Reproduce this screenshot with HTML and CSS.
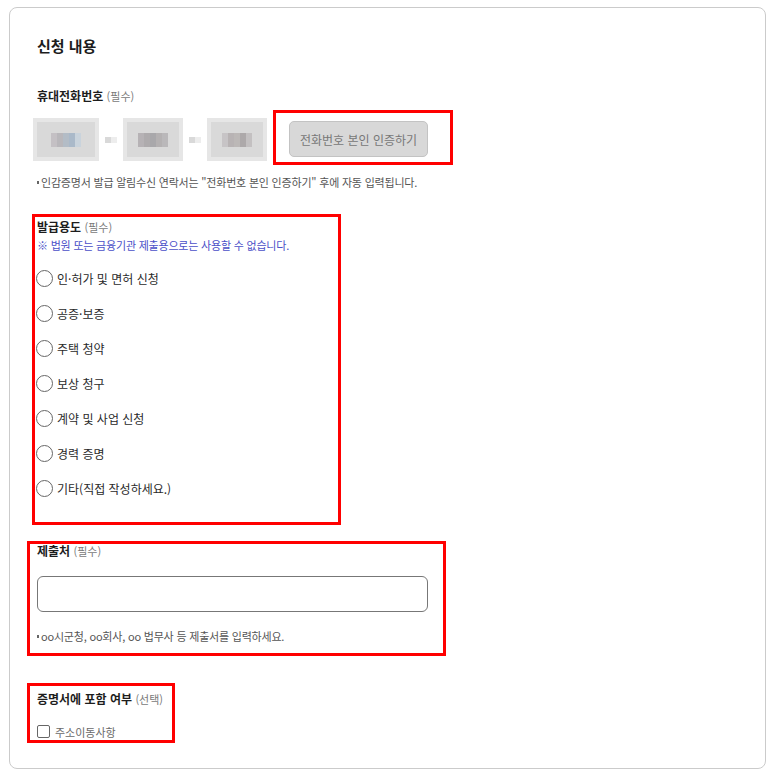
FILE: index.html
```html
<!DOCTYPE html>
<html lang="ko">

<head>
    <meta charset="UTF-8">
    <meta name="viewport" content="width=device-width, initial-scale=1.0">
    <title>신청 내용</title>
    <link rel="stylesheet" href="styles.css">
</head>

<body>
    <div class="card">
        <h2 class="title">신청 내용</h2>

        <div class="label">휴대전화번호 <span class="req">(필수)</span></div>
        <div class="phone-row">
            <div class="blur blur-wide">
                <span class="px" style="background:#c4c0c4"></span><span class="px" style="background:#b9b7bb"></span><span class="px" style="background:#b3bcc6"></span><span class="px" style="background:#aab9c9"></span><span class="px" style="background:#c9d3dc"></span>
            </div>
            <span class="dash"></span>
            <div class="blur">
                <span class="px" style="background:#b6b2b5"></span><span class="px" style="background:#aeabad"></span><span class="px" style="background:#a9a8ab"></span><span class="px" style="background:#b4b1b2"></span><span class="px" style="background:#bab8ba"></span>
            </div>
            <span class="dash"></span>
            <div class="blur">
                <span class="px" style="background:#c7c4c6"></span><span class="px" style="background:#b8b3b4"></span><span class="px" style="background:#bcb8b7"></span><span class="px" style="background:#ada9aa"></span><span class="px" style="background:#c3c0c1"></span>
            </div>
            <div class="mark mark-btn">
                <button class="verify" type="button" disabled>전화번호 본인 인증하기</button>
            </div>
        </div>
        <p class="note">인감증명서 발급 알림수신 연락서는 "전화번호 본인 인증하기" 후에 자동 입력됩니다.</p>

        <div class="mark mark-usage">
            <div class="label">발급용도 <span class="req">(필수)</span></div>
            <p class="warn">※ 법원 또는 금융기관 제출용으로는 사용할 수 없습니다.</p>
            <ul class="radios">
                <li><span class="radio"></span>인·허가 및 면허 신청</li>
                <li><span class="radio"></span>공증·보증</li>
                <li><span class="radio"></span>주택 청약</li>
                <li><span class="radio"></span>보상 청구</li>
                <li><span class="radio"></span>계약 및 사업 신청</li>
                <li><span class="radio"></span>경력 증명</li>
                <li><span class="radio"></span>기타(직접 작성하세요.)</li>
            </ul>
        </div>

        <div class="mark mark-place">
            <div class="label label-tight">제출처 <span class="req">(필수)</span></div>
            <input class="text-input" type="text">
            <p class="note">oo시군청, oo회사, oo 법무사 등 제출서를 입력하세요.</p>
        </div>

        <div class="mark mark-include">
            <div class="label">증명서에 포함 여부 <span class="req">(선택)</span></div>
            <label class="check"><span class="box"></span>주소이동사항</label>
        </div>
    </div>
</body>

</html>
```

FILE: styles.css
```css
* {
    box-sizing: border-box;
}

body {
    margin: 0;
    background: #fff;
    font-family: "Noto Sans CJK KR", "Noto Sans", sans-serif;
    color: #222;
    overflow: hidden;
}

.card {
    margin: 7px 0 0 9px;
    width: calc(100% - 9px);
    border: 1px solid #cbcbcb;
    border-radius: 8px;
    padding: 0 0 25px 27px;
}

.title {
    margin: 27px 0 0;
    font-size: 15px;
    line-height: 22px;
    font-weight: 700;
    color: #1d1d1d;
}

.label {
    margin-top: 30px;
    font-size: 12px;
    line-height: 18px;
    font-weight: 700;
    color: #1d1d1d;
}

.req {
    font-size: 11px;
    font-weight: 400;
    color: #7a7a7a;
}

/* phone number */
.phone-row {
    display: flex;
    align-items: flex-start;
    gap: 6px;
    margin: 5px 0 0 -4px;
}

.blur {
    width: 60px;
    height: 43px;
    margin-top: 8px;
    background: #d9d9d9;
    box-shadow: inset 0 0 0 4px #e6e6e6;
    display: flex;
    align-items: center;
    justify-content: center;
    padding: 0 4px;
}

.blur-wide {
    width: 66px;
}

.px {
    width: 6px;
    height: 14px;
}

.dash {
    width: 12px;
    height: 6px;
    margin-top: 27px;
    background: linear-gradient(90deg, #d9d9d9 50%, #ededed 50%);
}

.mark {
    border: 3px solid #ff0000;
}

.mark-btn {
    padding: 8px 22px 5px 13px;
}

.verify {
    width: 139px;
    height: 36px;
    background: #d8d8d8;
    border: 1px solid #c3c3c3;
    border-radius: 5px;
    font-family: inherit;
    font-size: 12px;
    color: #777;
    padding: 0;
}

.note {
    margin: 9px 0 0;
    font-size: 11px;
    line-height: 16px;
    letter-spacing: -0.2px;
    color: #555;
    position: relative;
    padding-left: 4px;
}

.note::before {
    content: "";
    position: absolute;
    left: 0;
    top: 7px;
    width: 2px;
    height: 3px;
    background: #666;
}

/* usage */
.mark-usage {
    width: 309px;
    margin: 24px 0 0 -5px;
    padding: 1px 0 16px 2px;
}

.mark-usage .label {
    margin-top: 0;
}

.warn {
    margin: 1px 0 0;
    font-size: 11px;
    line-height: 16px;
    letter-spacing: -0.2px;
    color: #4b50c8;
}

.radios {
    list-style: none;
    margin: 8px 0 0;
    padding: 0;
}

.radios li {
    display: flex;
    align-items: center;
    height: 35px;
    font-size: 12px;
    color: #2a2a2a;
}

.radio {
    width: 17px;
    height: 17px;
    border: 1.5px solid #666;
    border-radius: 50%;
    margin: 0 4px 0 -1px;
    background: #fff;
}

/* place */
.mark-place {
    width: 419px;
    margin: 16px 0 0 -10px;
    padding: 0 0 9px 7px;
}

.label-tight {
    margin-top: 0;
    line-height: 14px;
}

.text-input {
    display: block;
    width: 391px;
    height: 36px;
    margin-top: 18px;
    border: 1px solid #777;
    border-radius: 6px;
    background: #fff;
}

.mark-place .note {
    margin-top: 16px;
}

/* include */
.mark-include {
    width: 148px;
    margin: 27px 0 0 -10px;
    padding: 4px 0 2px 7px;
}

.mark-include .label {
    margin-top: 0;
}

.check {
    display: flex;
    align-items: center;
    height: 13px;
    margin-top: 17px;
    font-size: 11px;
    color: #6a6a6a;
}

.box {
    width: 13px;
    height: 13px;
    border: 1px solid #666;
    border-radius: 2px;
    margin-right: 5px;
}
```
